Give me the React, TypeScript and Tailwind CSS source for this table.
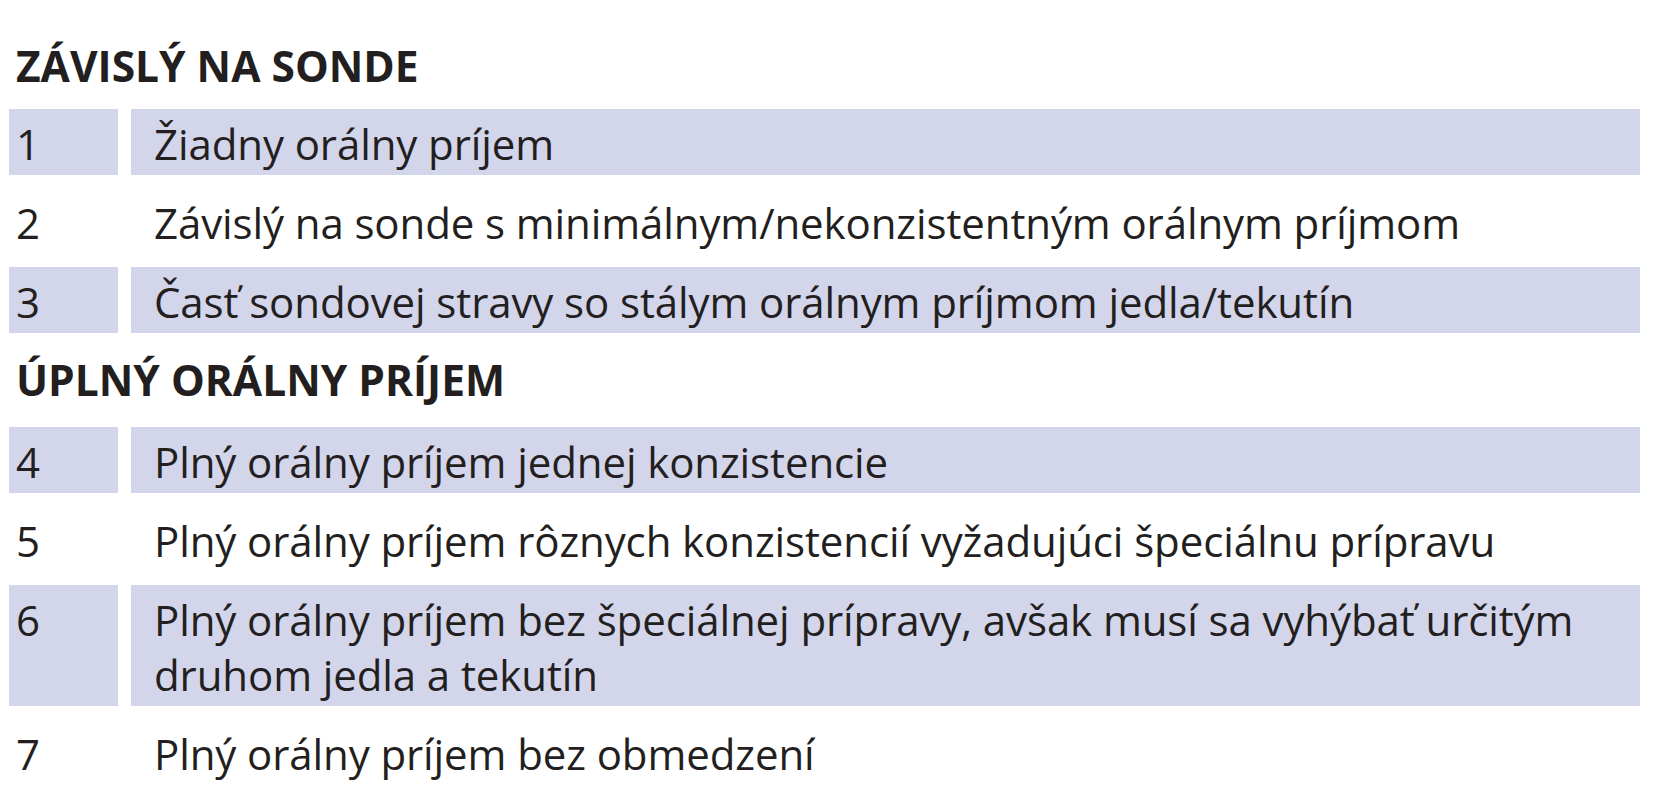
import React from "react";

type Row = { score: string; text: string; shaded: boolean };

const tubeRows: Row[] = [
	{ score: "1", text: "Žiadny orálny príjem", shaded: true },
	{ score: "2", text: "Závislý na sonde s minimálnym/nekonzistentným orálnym príjmom", shaded: false },
	{ score: "3", text: "Časť sondovej stravy so stálym orálnym príjmom jedla/tekutín", shaded: true },
];

const oralRows: Row[] = [
	{ score: "4", text: "Plný orálny príjem jednej konzistencie", shaded: true },
	{ score: "5", text: "Plný orálny príjem rôznych konzistencií vyžadujúci špeciálnu prípravu", shaded: false },
	{ score: "6", text: "Plný orálny príjem bez špeciálnej prípravy, avšak musí sa vyhýbať určitým druhom jedla a tekutín", shaded: true },
	{ score: "7", text: "Plný orálny príjem bez obmedzení", shaded: false },
];

function ScaleRow({ row }: { row: Row }) {
	const bg = row.shaded ? "bg-[#d3d5eb]" : "bg-transparent";
	return (
		<div className="grid grid-cols-[109px_1509px] gap-x-[13px]">
			<div className={`${bg} pl-[7px] pt-[7px] pb-[4px]`}>{row.score}</div>
			<div className={`${bg} pl-[23px] pr-[16px] pt-[7px] pb-[4px] tracking-[-0.1px]`}>{row.text}</div>
		</div>
	);
}

function Section({ title, rows, className }: { title: string; rows: Row[]; className?: string }) {
	return (
		<section className={className}>
			<h2 className="pl-[7px] text-[42.5px] leading-[50px] font-bold">{title}</h2>
			<div className="mt-[18px] flex flex-col gap-[13px]">
				{rows.map((row) => (
					<ScaleRow key={row.score} row={row} />
				))}
			</div>
		</section>
	);
}

export default function App() {
	return (
		<div className="min-h-screen bg-white pl-[9px] pt-[41px] font-['Open_Sans','Noto_Sans',sans-serif] text-[42px] leading-[55px] text-[#231f20]">
			<Section title="ZÁVISLÝ NA SONDE" rows={tubeRows} />
			<Section title="ÚPLNÝ ORÁLNY PRÍJEM" rows={oralRows} className="mt-[22px] [&>div]:mt-[22px]" />
		</div>
	);
}
